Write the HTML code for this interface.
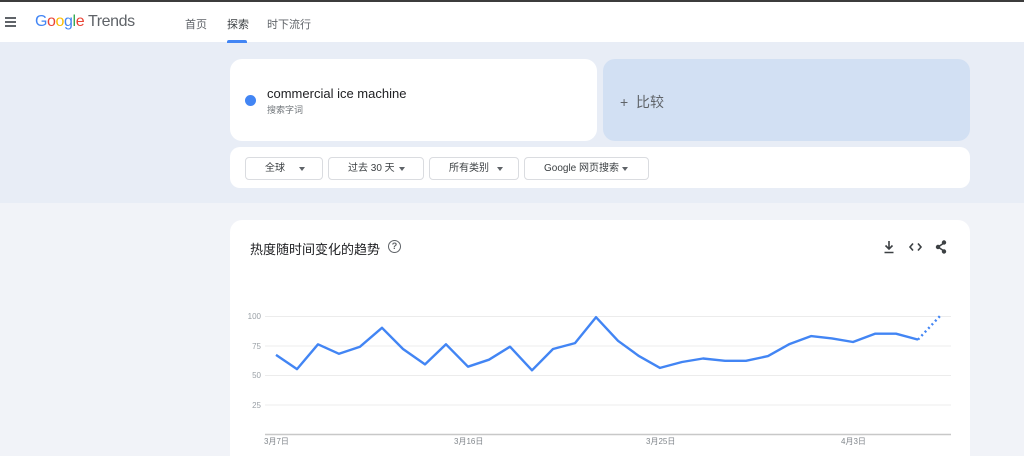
<!DOCTYPE html>
<html><head><meta charset="utf-8"><style>
*{margin:0;padding:0;box-sizing:border-box}
html,body{width:1024px;height:456px;overflow:hidden}
body{background:#f1f3f8;font-family:"Liberation Sans","Noto Sans CJK SC",sans-serif;position:relative}
.abs{position:absolute}
.card{background:#fff;border-radius:12px}
.btn{position:absolute;top:157px;height:23px;border:1px solid #dadce0;border-radius:4px;font-size:10px;color:#3c4043;line-height:21px}
.btn span{position:absolute}
.tri{position:absolute;top:9px;width:0;height:0;border-left:3.5px solid transparent;border-right:3.5px solid transparent;border-top:4px solid #5f6368}
</style></head><body>
<div class="abs" style="left:0;top:0;width:1024px;height:2px;background:#3c3c3c"></div>
<div class="abs" style="left:0;top:2px;width:1024px;height:40px;background:#fff"></div>
<div class="abs" style="left:0;top:42px;width:1024px;height:161px;background:#e8edf6"></div>
<div class="abs" style="left:5px;top:17px;width:11px;height:1.5px;background:#5f6368"></div>
<div class="abs" style="left:5px;top:21px;width:11px;height:1.5px;background:#5f6368"></div>
<div class="abs" style="left:5px;top:25px;width:11px;height:1.5px;background:#5f6368"></div>
<div class="abs" style="left:35px;top:13px;font-size:16px;letter-spacing:-0.4px"><span style="color:#4285f4">G</span><span style="color:#ea4335">o</span><span style="color:#fbbc05">o</span><span style="color:#4285f4">g</span><span style="color:#34a853">l</span><span style="color:#ea4335">e</span> <span style="color:#5f6368">Trends</span></div>
<div class="abs" style="left:185px;top:16px;font-size:11px;color:#5f6368">首页</div>
<div class="abs" style="left:227px;top:16px;font-size:11px;color:#3c4043">探索</div>
<div class="abs" style="left:227px;top:40px;width:20px;height:3px;background:#4285f4;border-radius:2px 2px 0 0"></div>
<div class="abs" style="left:267px;top:16px;font-size:11px;color:#5f6368">时下流行</div>
<div class="abs card" style="left:230px;top:59px;width:367px;height:82px"></div>
<div class="abs" style="left:245px;top:95px;width:11px;height:11px;border-radius:50%;background:#4285f4"></div>
<div class="abs" style="left:267px;top:86px;font-size:13px;color:#202124">commercial ice machine</div>
<div class="abs" style="left:267px;top:103px;font-size:9px;color:#70757a">搜索字词</div>
<div class="abs" style="left:603px;top:59px;width:367px;height:82px;background:#d2e0f3;border-radius:12px"></div>
<div class="abs" style="left:620px;top:92px;font-size:14px;color:#5f6368">+&nbsp;&nbsp;比较</div>
<div class="abs card" style="left:230px;top:147px;width:740px;height:41px;border-radius:10px"></div>
<div class="btn" style="left:245px;width:78px"><span style="left:19px">全球</span><i class="tri" style="left:53px"></i></div>
<div class="btn" style="left:328px;width:96px"><span style="left:19px">过去 30 天</span><i class="tri" style="left:70px"></i></div>
<div class="btn" style="left:429px;width:90px"><span style="left:19px">所有类别</span><i class="tri" style="left:67px"></i></div>
<div class="btn" style="left:524px;width:125px"><span style="left:19px">Google 网页搜索</span><i class="tri" style="left:97px"></i></div>
<div class="abs" style="left:230px;top:220px;width:740px;height:236px;background:#fff;border-radius:12px 12px 0 0"></div>
<div class="abs" style="left:250px;top:239px;font-size:13px;color:#202124">热度随时间变化的趋势</div>
<div class="abs" style="left:388px;top:240px;width:13px;height:13px;border:1.3px solid #5f6368;border-radius:50%;font-size:9px;line-height:11px;text-align:center;color:#5f6368;font-weight:bold">?</div>
<svg class="abs" style="left:0;top:0" width="1024" height="456">
<g fill="none" stroke="#3c4043" stroke-width="1.6">
<path d="M889 241v8M885.5 245.5l3.5 3.5 3.5-3.5M884.5 252.5h9"/>
<path d="M913 243.5l-3 3.5 3 3.5M918 243.5l3 3.5-3 3.5"/>
<path d="M938 247l6-4M938 247l6 4"/>
</g>
<g fill="#3c4043"><circle cx="944" cy="242.5" r="2.2"/><circle cx="938" cy="247" r="2.2"/><circle cx="944" cy="251.5" r="2.2"/></g>
<g stroke="#ececec" stroke-width="1"><path d="M265 316.5H951M265 346H951M265 375.5H951M265 405H951"/></g>
<path d="M265 434.5H951" stroke="#c8c8c8" stroke-width="1.5"/>
<g font-size="8" fill="#9aa0a6" font-family="Liberation Sans,sans-serif" text-anchor="end"><text x="261" y="319">100</text><text x="261" y="349">75</text><text x="261" y="378">50</text><text x="261" y="408">25</text></g>
<g font-size="8" fill="#80868b" font-family="Liberation Sans,Noto Sans CJK SC,sans-serif"><text x="264" y="444">3月7日</text><text x="454" y="444">3月16日</text><text x="646" y="444">3月25日</text><text x="841" y="444">4月3日</text></g>
<polyline fill="none" stroke="#4285f4" stroke-width="2.4" stroke-linejoin="round" points="276,354.9 297,369.1 318,344.3 339,353.8 360,346.7 382,327.8 403,349 425,364.4 446,344.3 468,366.7 489,359.7 510,346.7 532,370.3 553,349 575,343.1 596,317.2 618,340.8 639,356.1 660,367.9 682,362 703,358.5 725,360.8 746,360.8 768,356.1 789,344.3 811,336.1 832,338.4 853,342 875,333.7 896,333.7 918,339.6"/>
<path d="M918 339.6L940 316" stroke="#4285f4" stroke-width="2.4" stroke-dasharray="2 3" fill="none"/>
</svg>
</body></html>
